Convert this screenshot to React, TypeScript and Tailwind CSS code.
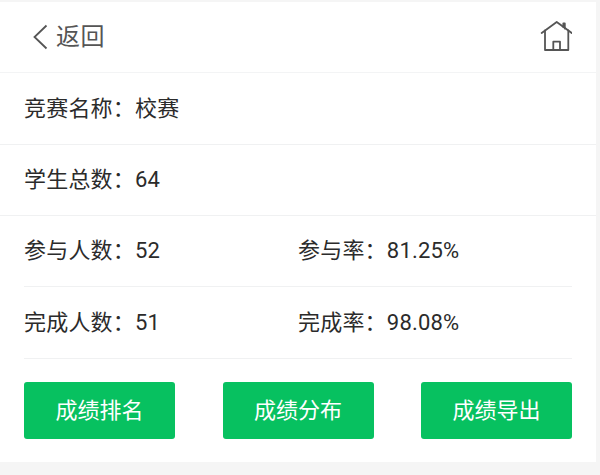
const font = { fontFamily: 'Roboto, "Noto Sans CJK SC", sans-serif' };

function Stat({ label, value }: { label: string; value: string }) {
  return (
    <div className="flex items-center text-[22px] leading-none tracking-[0.2px] text-[#2b2b2b]">
      <span>{label}：</span>
      <span>{value}</span>
    </div>
  );
}

export default function App() {
  const buttons = ["成绩排名", "成绩分布", "成绩导出"];

  return (
    <div className="h-[475px] w-[600px] overflow-hidden bg-[#f5f5f5] pt-[2px]" style={font}>
      <div className="h-[460px] w-[596px] bg-white">
        <div className="flex h-[71px] items-center justify-between border-b border-[#f3f4f5] pl-[32px] pr-[24px]">
          <div className="flex items-center gap-[8px]">
            <svg width="16" height="26" viewBox="0 0 16 26" fill="none" stroke="#555" strokeWidth="1.8">
              <path d="M14.5 1.5 2.5 13l12 11.5" />
            </svg>
            <span className="text-[24px] leading-none tracking-[0.4px] text-[#555]">返回</span>
          </div>
          <svg width="32" height="32" viewBox="0 0 32 32" fill="none" stroke="#555" strokeWidth="1.8" strokeLinejoin="round" strokeLinecap="round">
            <path d="M1.7 12 16.7 1l15 11" />
            <path d="M5 9.5V29h23.3V9.5" />
            <path d="M13.3 29v-8.3H20V29" />
            <path d="M23.3 6V2.5h1.5v5" />
          </svg>
        </div>

        <div className="flex h-[72px] items-center border-b border-[#f0f1f2] px-[24px]">
          <Stat label="竞赛名称" value="校赛" />
        </div>
        <div className="flex h-[71px] items-center border-b border-[#f0f1f2] px-[24px]">
          <Stat label="学生总数" value="64" />
        </div>

        <div className="px-[24px]">
          <div className="grid h-[71px] grid-cols-[274px_1fr] items-center border-b border-[#f0f1f2]">
            <Stat label="参与人数" value="52" />
            <Stat label="参与率" value="81.25%" />
          </div>
          <div className="grid h-[72px] grid-cols-[274px_1fr] items-center border-b border-[#f0f1f2]">
            <Stat label="完成人数" value="51" />
            <Stat label="完成率" value="98.08%" />
          </div>

          <div className="mt-[23px] flex justify-between">
            {buttons.map((b) => (
              <button
                key={b}
                className="h-[57px] w-[151px] rounded-[3px] bg-[#07c160] text-[22px] text-white"
              >
                {b}
              </button>
            ))}
          </div>
        </div>
      </div>
    </div>
  );
}
